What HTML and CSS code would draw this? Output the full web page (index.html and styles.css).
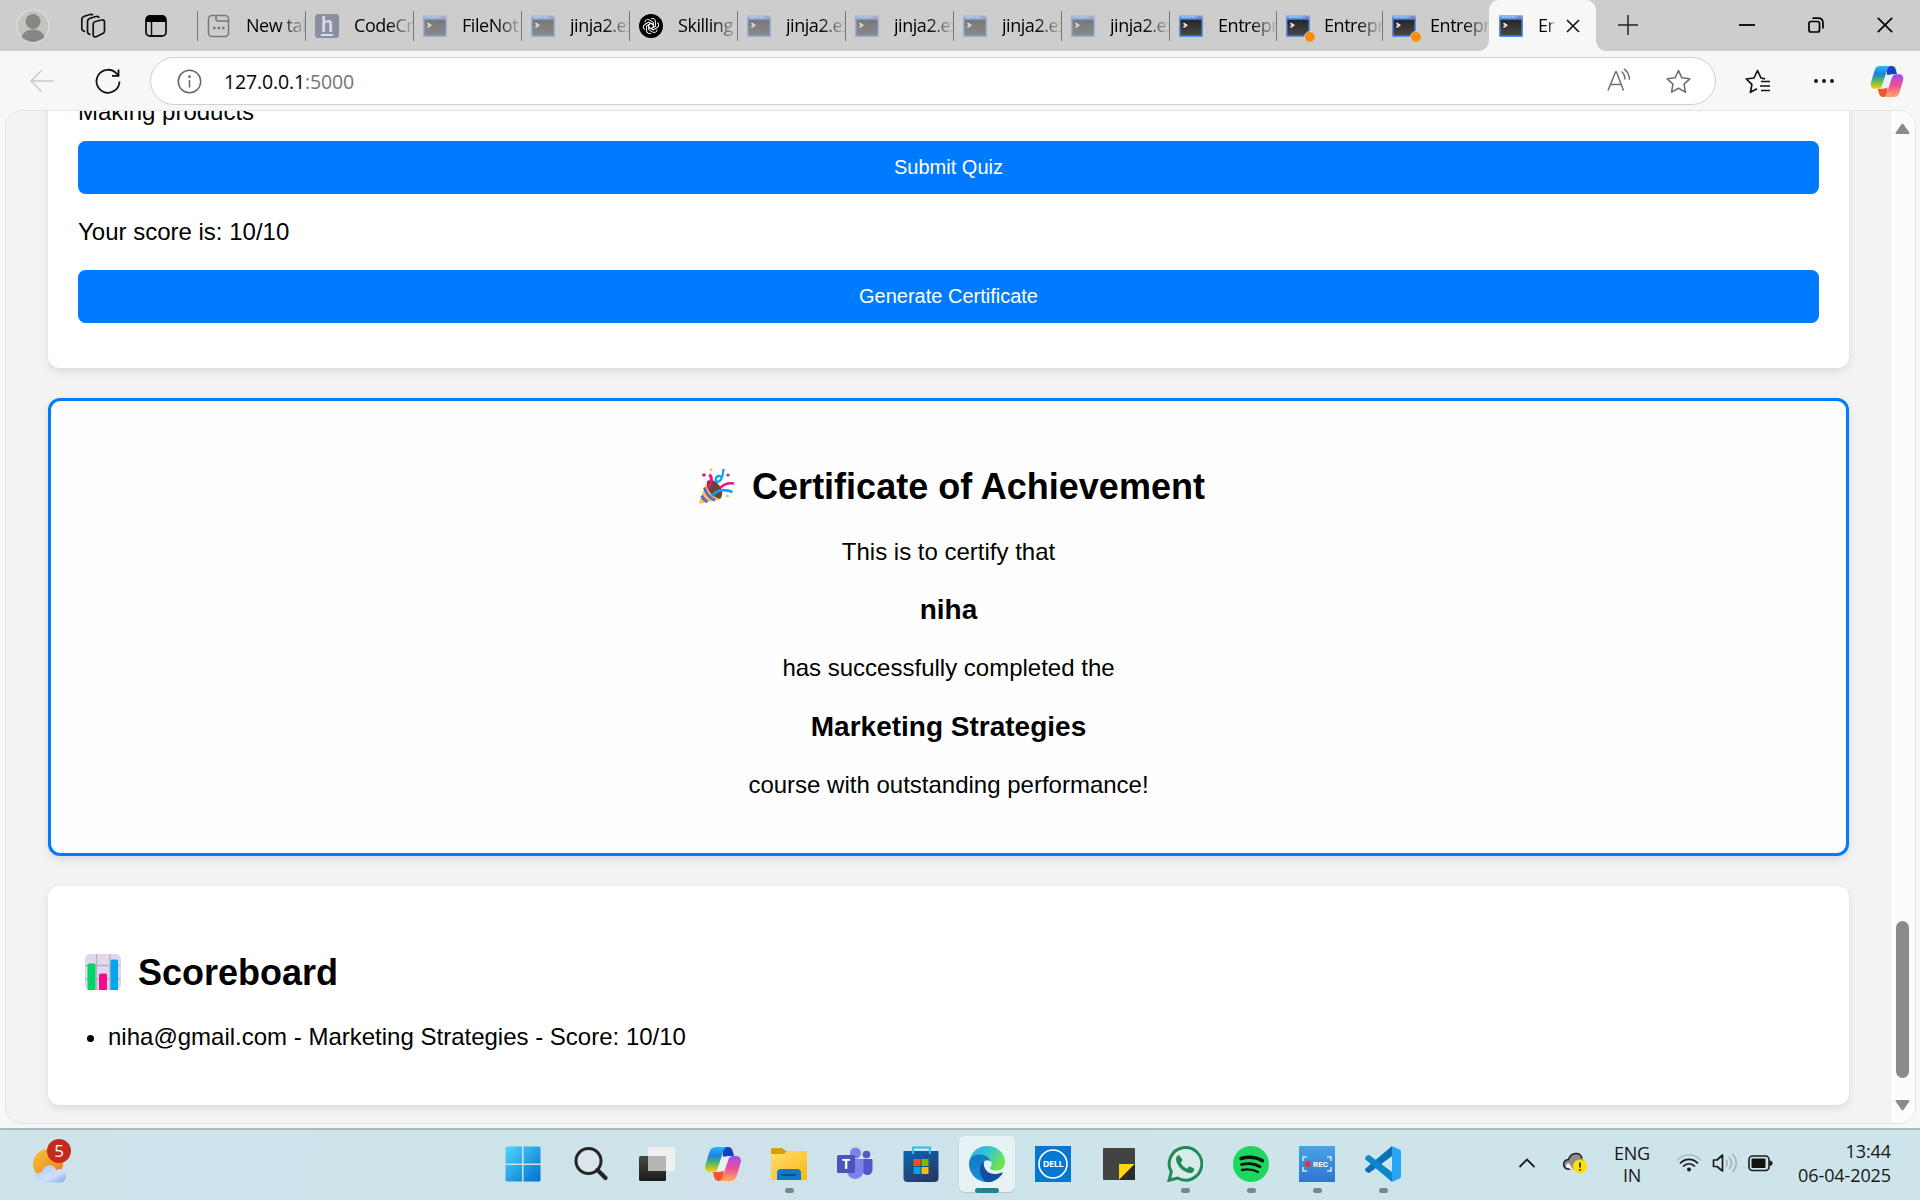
FILE: index.html
```html
<!DOCTYPE html>
<html lang="en">
<head>
<meta charset="utf-8">
<title>Entrepreneur Course</title>
<link rel="stylesheet" href="styles.css">
</head>
<body>
<svg class="defs" width="0" height="0">
  <defs>
    <linearGradient id="gTermBar" x1="0" y1="0" x2="0" y2="1"><stop offset="0" stop-color="#8fc0fb"/><stop offset="1" stop-color="#4b86dc"/></linearGradient>
    <linearGradient id="gTermBody" x1="0" y1="0" x2="0" y2="1"><stop offset="0" stop-color="#262626"/><stop offset="1" stop-color="#484848"/></linearGradient>
    <linearGradient id="gCopA" x1="0" y1="0" x2="0" y2="1"><stop offset="0" stop-color="#25b9f5"/><stop offset=".35" stop-color="#1a83dd"/><stop offset=".62" stop-color="#4db56c"/><stop offset="1" stop-color="#ffd000"/></linearGradient>
    <linearGradient id="gCopB" x1="0" y1="0" x2="0" y2="1"><stop offset="0" stop-color="#a04cf0"/><stop offset=".5" stop-color="#ee5095"/><stop offset="1" stop-color="#ffab62"/></linearGradient>
    <linearGradient id="gWin" x1="0" y1="0" x2="1" y2="1"><stop offset="0" stop-color="#4fd5ff"/><stop offset="1" stop-color="#0070d0"/></linearGradient>
    <linearGradient id="gSun" x1="0" y1="0" x2="1" y2="1"><stop offset="0" stop-color="#eec73c"/><stop offset="1" stop-color="#f4741a"/></linearGradient>
    <linearGradient id="gCloud" x1="0" y1="0" x2="1" y2="1"><stop offset="0" stop-color="#a6c6f6"/><stop offset=".6" stop-color="#d3e1f9"/><stop offset="1" stop-color="#7da6e8"/></linearGradient>
    <linearGradient id="gFolder" x1="0" y1="0" x2="1" y2="1"><stop offset="0" stop-color="#ffdc70"/><stop offset="1" stop-color="#f9b91a"/></linearGradient>
    <linearGradient id="gStore" x1="0" y1="0" x2=".6" y2="1"><stop offset="0" stop-color="#0b66b5"/><stop offset="1" stop-color="#263a68"/></linearGradient>
    <linearGradient id="gEdgeTop" x1="0" y1="0" x2="1" y2=".5"><stop offset="0" stop-color="#2aa9ec"/><stop offset=".5" stop-color="#35c5d4"/><stop offset="1" stop-color="#70e34c"/></linearGradient>
    <linearGradient id="gEdgeLeft" x1="0" y1="0" x2="0" y2="1"><stop offset="0" stop-color="#1379c2"/><stop offset="1" stop-color="#1a8ee0"/></linearGradient>
    <linearGradient id="gRec" x1="0" y1="0" x2="0" y2="1"><stop offset="0" stop-color="#47a3ea"/><stop offset="1" stop-color="#2f75cd"/></linearGradient>
    <linearGradient id="gDark" x1="0" y1="0" x2="0" y2="1"><stop offset="0" stop-color="#494847"/><stop offset="1" stop-color="#1a1a1a"/></linearGradient>
    <symbol id="term" viewBox="0 0 24 22">
      <rect width="24" height="22" rx="1" fill="#5a92e2"/>
      <rect width="24" height="4.5" rx="1" fill="url(#gTermBar)"/>
      <path d="M3 2.2h13" stroke="#c8e0ff" stroke-dasharray="1.5 1"/>
      <rect x="19.5" y="1.3" width="2.2" height="2" fill="#d8536a"/>
      <rect x="1.5" y="4.7" width="21" height="15.8" fill="url(#gTermBody)"/>
      <path d="M4.5 8.3l3 2-3 2" stroke="#eee" stroke-width="1.7" fill="none"/>
    </symbol>
    <symbol id="copilot" viewBox="0 0 36 34">
      <path d="M17 0h6c3 0 4 1.700 4.800 4.300L29 9h-5c-3 0-4.500 2-5.300 5z" fill="#1541c4"/>
      <path d="M19 34h-5c-3 0-4-1.500-4.800-4L8 25h5c3 0 4.500-2 5.300-5z" fill="#f4552e"/>
      <path d="M10.500 0H23c-3 0-4 2-5 5l-5.300 16c-1 3-2.300 4-5.200 4H5c-4 0-5.600-3-4.600-7L4 6c1-4 3-6 6.500-6z" fill="url(#gCopA)"/>
      <path d="M25.500 34H13c3 0 4-2 5-5l5.300-16c1-3 2.300-4 5.200-4H31c4 0 5.600 3 4.600 7L32 28c-1 4-3 6-6.500 6z" fill="url(#gCopB)"/>
      <path d="M19.500 9.500h5.800c-1.500.8-2.200 2.200-2.800 4l-2.300 7c-1 3-2 4-4.500 4h-4.500c1-.8 1.500-1.800 2-3.300l2.600-8c.8-2.400 1.700-3.700 3.700-3.700z" fill="#e8f2f6"/>
    </symbol>
  </defs>
</svg>

<header class="tabstrip">
  <div class="strip-tools">
    <svg width="34" height="34" viewBox="0 0 34 34"><circle cx="17" cy="17" r="16" fill="#c6c4c1" stroke="#e0dedb" stroke-width="1.200"/><circle cx="17" cy="12.500" r="7.500" fill="#8a8683"/><path d="M5.500 28c2-5.500 6.500-7.500 11.500-7.500s9.500 2 11.500 7.500a16 16 0 0 1-23 0z" fill="#8a8683"/></svg>
    <svg width="26" height="26" viewBox="0 0 26 26" fill="none" stroke="#111" stroke-width="1.700" stroke-linejoin="round"><path d="M13.200 10.800c.3-1.300 1-2 2.300-2.300l6.200-1.500c1.700-.4 2.800.4 2.800 2v9c0 1.300-.6 2-1.800 2.500l-6 3c-1.900.9-3.500.2-3.500-1.800z"/><path d="M10.500 21.500c-2-.2-3-1.200-3-3V8.500c0-1.800.8-2.700 2.600-3.300l5.900-1.700c1.500-.4 2.600 0 3.200 1.300"/><path d="M5 18.500c-2-.3-3.200-1.300-3.200-3.200V6.500c0-1.800.8-2.700 2.600-3.300L10 1.500c1.300-.4 2.300-.1 3 .8"/></svg>
    <svg width="24" height="24" viewBox="0 0 24 24"><rect x="2" y="2" width="20" height="20" rx="4" fill="none" stroke="#111" stroke-width="1.800"/><path d="M2 8V5a3.500 3.500 0 0 1 3.500-3.500h13A3.500 3.500 0 0 1 22 5v3z" fill="#000"/><path d="M7.500 8v14" stroke="#111" stroke-width="1.500"/></svg>
  </div>
  <nav class="tabs">
    <div class="tab"><svg class="fav" width="24" height="24" viewBox="0 0 24 24" fill="none" stroke="#777" stroke-width="1.500"><rect x="1.500" y="1.500" width="20" height="21" rx="3.500"/><path d="M9 2v3c0 1.500.7 2 2 2h10"/><path d="M6 14h2.500M10.500 14H13M15 14h2.500" stroke-width="2.500"/></svg><span class="label">New tab</span></div>
    <div class="tab"><span class="fav hacker">h</span><span class="label">CodeCr</span></div>
    <div class="tab"><svg class="fav faded" width="24" height="22"><use href="#term"/></svg><span class="label">FileNot</span></div>
    <div class="tab"><svg class="fav faded" width="24" height="22"><use href="#term"/></svg><span class="label">jinja2.ex</span></div>
    <div class="tab"><svg class="fav" width="24" height="24" viewBox="0 0 24 24"><circle cx="12" cy="12" r="12" fill="#000"/><g fill="none" stroke="#fff" stroke-width="1"><path id="petal" d="M12 9.300l-2.300 1.300v5.200l4.200 2.400c2 1 4.200-.3 4.200-2.600"/><use href="#petal" transform="rotate(60 12 12)"/><use href="#petal" transform="rotate(120 12 12)"/><use href="#petal" transform="rotate(180 12 12)"/><use href="#petal" transform="rotate(240 12 12)"/><use href="#petal" transform="rotate(300 12 12)"/></g></svg><span class="label">Skilling</span></div>
    <div class="tab"><svg class="fav faded" width="24" height="22"><use href="#term"/></svg><span class="label">jinja2.ex</span></div>
    <div class="tab"><svg class="fav faded" width="24" height="22"><use href="#term"/></svg><span class="label">jinja2.ex</span></div>
    <div class="tab"><svg class="fav faded" width="24" height="22"><use href="#term"/></svg><span class="label">jinja2.ex</span></div>
    <div class="tab"><svg class="fav faded" width="24" height="22"><use href="#term"/></svg><span class="label">jinja2.ex</span></div>
    <div class="tab last-full"><svg class="fav" width="24" height="22"><use href="#term"/></svg><span class="label">Entrepr</span></div>
    <div class="tab narrow"><span class="fav alert"><svg width="24" height="22"><use href="#term"/></svg></span><span class="label">Entrepr</span></div>
    <div class="tab mid"><span class="fav alert"><svg width="24" height="22"><use href="#term"/></svg></span><span class="label">Entrepr</span></div>
    <div class="tab active"><svg class="fav" width="24" height="22"><use href="#term"/></svg><span class="label">En</span><svg class="close" width="14" height="14" viewBox="0 0 14 14" stroke="#111" stroke-width="1.600"><path d="M1 1l12 12M13 1L1 13"/></svg></div>
  </nav>
  <svg class="newtab" width="22" height="22" viewBox="0 0 22 22" stroke="#222" stroke-width="1.500"><path d="M11 1v20M1 11h20"/></svg>
  <div class="window-controls">
    <svg width="16" height="16" viewBox="0 0 16 16" stroke="#000" stroke-width="1.800"><path d="M0 8h16"/></svg>
    <svg width="16" height="16" viewBox="0 0 16 16" fill="none" stroke="#000" stroke-width="1.700"><rect x="1" y="4.500" width="10.500" height="10.500" rx="2"/><path d="M4.500 1.200H10c3 0 5 1.800 5 4.800v5.500"/></svg>
    <svg width="16" height="16" viewBox="0 0 16 16" stroke="#000" stroke-width="1.700"><path d="M.8.8l14.400 14.400M15.200.8L.8 15.200"/></svg>
  </div>
</header>

<div class="toolbar">
  <svg class="back" width="26" height="24" viewBox="0 0 26 24" fill="none" stroke="#c9c9c9" stroke-width="1.600"><path d="M25 12H2M12.500 1.500L2 12l10.500 10.500"/></svg>
  <svg class="reload" width="26" height="26" viewBox="0 0 26 26" fill="none" stroke="#111" stroke-width="1.800"><path d="M24.500 13.500A11.500 11.500 0 1 1 21.500 5.500l2 2"/><path d="M23.500 1.500v6.300h-6.500"/></svg>
  <div class="address">
    <svg width="25" height="25" viewBox="0 0 25 25" fill="none" stroke="#666" stroke-width="1.500"><circle cx="12.500" cy="12.500" r="11.200"/><path d="M12.500 11v7.500"/><circle cx="12.500" cy="7.700" r=".6"/></svg>
    <span class="url">127.0.0.1<i>:5000</i></span>
    <svg class="read" width="25" height="24" viewBox="0 0 25 24" fill="none" stroke="#707070" stroke-width="1.500"><path d="M1 22.500L8.500 4h1L16.500 22.500M3.500 16.500h11"/><path d="M14.500 3.500c2.500 2 3.500 4.500 3.500 8M17 .8c4 3 5.500 6.500 5.500 11"/></svg>
    <svg class="star" width="25" height="25" viewBox="0 0 25 25" fill="none" stroke="#707070" stroke-width="1.600" stroke-linejoin="round"><path d="M12.500 1.500l3.400 7.300 7.900 1-5.800 5.400 1.500 7.900-7-3.900-7 3.900L7 15.200 1.200 9.800l7.900-1z"/></svg>
  </div>
  <svg class="favs" width="26" height="25" viewBox="0 0 26 25" fill="none" stroke="#111" stroke-width="1.700" stroke-linejoin="round"><path d="M20 9.800L16 9l-3.500-7.500L9 9l-7.800 1 5.700 5.400-1.500 7.900 6.600-3.600M16 12.500h9M15 17h10M16 21.500h9"/></svg>
  <svg class="more" width="22" height="6" viewBox="0 0 22 6" fill="#111"><circle cx="3" cy="3" r="1.900"/><circle cx="11" cy="3" r="1.900"/><circle cx="19" cy="3" r="1.900"/></svg>
  <svg class="cop" width="34" height="31"><use href="#copilot"/></svg>
</div>

<div class="viewport">
  <main class="page">
    <section class="card quiz">
      <p class="option">Making products</p>
      <button class="btn">Submit Quiz</button>
      <p class="score">Your score is: 10/10</p>
      <button class="btn">Generate Certificate</button>
    </section>
    <section class="card certificate">
      <h2><svg class="emoji" width="36" height="36" viewBox="0 0 36 36" fill="none"><path d="M8 13c4-2 8-1 12 4s4 11 1 14L7 33z" fill="#6d4534"/><path d="M7.500 13.500c0 9 6 16 14.500 17.500L2 35.500c-1.500.3-2-.5-1.700-1.700z" fill="#fcc24c"/><path d="M5.500 19.500C7 26 10.500 30 16 32.300M2.800 27.500c1 3 3 5.200 5.700 6.500" stroke="#5e68dc" stroke-width="3"/><path d="M10.500 6.500c3 3.500 2.500 9-2 13.500" stroke="#f70a8d" stroke-width="3"/><path d="M24.500 1c-.5 6-2 11-4.500 12.500-2.500 1-4-1-3-3.500 1.200-2.500 4-2.500 5-1" stroke="#0aa5ee" stroke-width="2.300"/><path d="M21 20c3.500-3.500 8-5.500 14-4.500" stroke="#f70a8d" stroke-width="2.700"/><path d="M13 28c5-6 12-7.500 20.500-4" stroke="#0aa5ee" stroke-width="2.800"/><circle cx="5" cy="7" r="1.800" fill="#f70a8d"/><circle cx="29" cy="7" r="1.600" fill="#f70a8d"/><circle cx="12" cy="1.800" r="1.500" fill="#fcc24c"/><circle cx="28.500" cy="28" r="1.500" fill="#fcc24c"/></svg> Certificate of Achievement</h2>
      <p>This is to certify that</p>
      <h3>niha</h3>
      <p>has successfully completed the</p>
      <h3 class="course">Marketing Strategies</h3>
      <p>course with outstanding performance!</p>
    </section>
    <section class="card scoreboard">
      <h2><svg class="emoji" width="36" height="36" viewBox="0 0 36 36"><rect width="36" height="36" rx="5" fill="#e1d8ec"/><path d="M11.500 0v36M25 0v36M0 11.500h36M0 25h36" stroke="#b8b0c2" stroke-width="1.300"/><path d="M2.500 36V11a1.500 1.500 0 0 1 1.500-1.500h5a1.500 1.500 0 0 1 1.500 1.500v25z" fill="#00d26a"/><path d="M14 36V21a1.500 1.500 0 0 1 1.500-1.500h5A1.500 1.500 0 0 1 22 21v15z" fill="#f70a8d"/><path d="M25.500 36V7A1.500 1.500 0 0 1 27 5.500h4.500A1.500 1.500 0 0 1 33 7v29z" fill="#00a6ed"/></svg> Scoreboard</h2>
      <ul><li>niha@gmail.com - Marketing Strategies - Score: 10/10</li></ul>
    </section>
  </main>
  <aside class="scrollbar">
    <svg class="up" width="15" height="11" viewBox="0 0 15 11"><path d="M7.500 1.500L13.500 10h-12z" fill="#8b8b8b" stroke="#8b8b8b" stroke-width="2" stroke-linejoin="round"/></svg>
    <div class="thumb"></div>
    <svg width="15" height="11" viewBox="0 0 15 11"><path d="M7.500 9.500L13.500 1h-12z" fill="#8b8b8b" stroke="#8b8b8b" stroke-width="2" stroke-linejoin="round"/></svg>
  </aside>
</div>

<footer class="taskbar">
  <div class="weather">
    <svg width="34" height="34" viewBox="0 0 34 34"><circle cx="15" cy="15" r="15" fill="url(#gSun)"/><path d="M8 33.500a5 5 0 0 1-1-10c2 0 2-.500 2.500-2 2.500-7 11.500-7 14 0 4-3.500 9.500-.500 9.500 5 0 4-2 7-5 7z" fill="url(#gCloud)"/></svg>
    <span class="badge">5</span>
  </div>
  <div class="apps">
    <div class="app start"><svg width="36" height="36" viewBox="0 0 36 36"><path d="M2 .5h15v17H.500V2A1.500 1.500 0 0 1 2 .5zM18.500.5H34A1.500 1.500 0 0 1 35.500 2v15.500h-17zM.500 19h16.500v16.500H2A1.500 1.500 0 0 1 .500 34zM18.500 19h17v15a1.500 1.500 0 0 1-1.500 1.500H18.500z" fill="url(#gWin)"/></svg></div>
    <div class="app"><svg width="36" height="36" viewBox="0 0 36 36" fill="none" stroke="#262524"><circle cx="15.500" cy="15" r="12.500" stroke-width="3" fill="#d9e6ee"/><path d="M24.500 24l8 8" stroke-width="4.200" stroke-linecap="round"/></svg></div>
    <div class="app"><svg width="36" height="36" viewBox="0 0 36 36"><rect x="0" y="10" width="27" height="25" rx="1.500" fill="url(#gDark)"/><rect x="9" y="1" width="27" height="24" rx="1" fill="#f0f0f0"/><path d="M9 10h18v15H9z" fill="#b5b5b5"/></svg></div>
    <div class="app"><svg width="36" height="34"><use href="#copilot"/></svg></div>
    <div class="app run"><svg width="36" height="36" viewBox="0 0 36 36"><path d="M0 3.500A1.500 1.500 0 0 1 1.500 2H10c3 0 3 3 6 3v5H0z" fill="#dc9c08"/><path d="M0 8h13l3-3h19a1 1 0 0 1 1 1v28H0z" fill="url(#gFolder)"/><path d="M6 34v-7a4 4 0 0 1 4-4h16a4 4 0 0 1 4 4v7z" fill="#0e78c9"/><path d="M10.500 29h14.500" stroke="#06508f" stroke-width="2"/></svg></div>
    <div class="app"><svg width="36" height="36" viewBox="0 0 36 36"><circle cx="29.500" cy="8.500" r="3.800" fill="#5059c9"/><path d="M25 13h9.500a1 1 0 0 1 1 1v9c0 8-10 8-10.500 0z" fill="#5059c9"/><circle cx="18.500" cy="7" r="5.500" fill="#7b83eb"/><path d="M10 13h15.500a1 1 0 0 1 1 1v10c0 12-16.500 12-16.500 0z" fill="#7b83eb"/><rect y="9" width="18" height="18" rx="1.500" fill="#4b53bc"/><text x="9" y="23" text-anchor="middle" class="teams-t">T</text></svg></div>
    <div class="app"><svg width="36" height="36" viewBox="0 0 36 36"><path d="M10 8V1.500h17V8" fill="none" stroke="#28c0ef" stroke-width="2"/><path d="M.500 5h35v27a4 4 0 0 1-4 4h-27a4 4 0 0 1-4-4z" fill="url(#gStore)"/><path d="M10 8V4M27 8V4" stroke="#28c0ef" stroke-width="2"/><path d="M10.500 13h7v7h-7z" fill="#f25022"/><path d="M18.500 13h7v7h-7z" fill="#7fba00"/><path d="M10.500 21h7v7h-7z" fill="#00a4ef"/><path d="M18.500 21h7v7h-7z" fill="#ffb900"/></svg></div>
    <div class="app current"><svg width="36" height="36" viewBox="0 0 36 36"><path d="M18 0c10.500 0 18 7 18 16 0 6-4 8.500-9 8.500-4 0-6.500-1.500-6-3 3-3 2-8-3-8C10 7 3 9 .500 14.500 2 6 9.500 0 18 0z" fill="url(#gEdgeTop)"/><path d="M0 18C0 11 6 8 11.500 8.500c6 .5 10 4 10 8 0-2-5.500-4-7.500 1-2 8 2 15 10 17.500-2 .7-4 1-6 1C8 36 0 28 0 18z" fill="url(#gEdgeLeft)"/><path d="M15 15c-5 4-6.500 13 1.500 20.900C25 37 30.500 32 33.500 27.500c.5-.8-.2-1.300-1-.9C23 31 13 25 15 15z" fill="#124f9f"/></svg></div>
    <div class="app"><svg width="36" height="36" viewBox="0 0 36 36"><path d="M0 0h36v36H0z" fill="#0678d2"/><circle cx="18" cy="18" r="14" fill="none" stroke="#fff" stroke-width="1.600"/><text x="18" y="21.200" text-anchor="middle" class="dell-t">DELL</text></svg></div>
    <div class="app"><svg width="36" height="36" viewBox="0 0 36 36"><rect x="2" y="2" width="32" height="32" rx="1" fill="#434343"/><path d="M18 18h15.500L18 34z" fill="#ffd60a"/><path d="M34 18v16H18z" fill="#2b2b2b"/></svg></div>
    <div class="app run"><svg width="36" height="36" viewBox="0 0 36 36"><path d="M2 34.300l2.300-8.500A16.300 16.300 0 1 1 10.500 32z" fill="#d8ebe8" stroke="#208a57" stroke-width="3"/><path d="M12.500 9.500c-1-.6-3.500.5-3.500 4C9.500 20 17 27 23.500 27c3 0 4-2.500 3.500-4.500l-4.500-2.200-2.500 2.500c-3-1.500-5-3.500-6.300-6.300l2-2.500z" fill="#208a57"/></svg></div>
    <div class="app run"><svg width="36" height="36" viewBox="0 0 36 36" fill="none" stroke="#111" stroke-linecap="round"><circle cx="18" cy="18" r="18" fill="#1ed760" stroke="none"/><path d="M8 12.500c7-2 15.500-1.300 21.500 2.300" stroke-width="3.400"/><path d="M8.500 18.500c6-1.500 13-1 18.500 2.200" stroke-width="2.800"/><path d="M9 24c5-1 11-.7 16 2" stroke-width="2.300"/></svg></div>
    <div class="app run"><svg width="36" height="36" viewBox="0 0 36 36"><path d="M0 0h36v36H0z" fill="url(#gRec)"/><path d="M8 11H4v4M28 11h4v4M8 25H4v-4M28 25h4v-4" fill="none" stroke="#d5e8fb" stroke-width="1.500"/><circle cx="8.800" cy="18" r="2.900" fill="#d9383c"/><text x="21.500" y="20.800" text-anchor="middle" class="rec-t">REC</text></svg></div>
    <div class="app run"><svg width="36" height="36" viewBox="0 0 36 36"><path d="M27 0v10L4.500 26.700c-.8.600-1.500.5-2.200-.1L.500 24.800c-.7-.7-.7-1.500 0-2.200z" fill="#0a70b8"/><path d="M27 36V26L4.500 9.300c-.8-.6-1.500-.5-2.200.1L.500 11.200c-.7.700-.7 1.500 0 2.200z" fill="#0b87cf"/><path d="M27 0l7.500 3.500c1 .5 1.500 1 1.500 2.200v24.600c0 1.200-.5 1.700-1.500 2.200L27 36z" fill="#27a5f3"/></svg></div>
  </div>
  <div class="tray">
    <svg class="chev" width="18" height="10" viewBox="0 0 18 10" fill="none" stroke="#1c1c1c" stroke-width="1.800"><path d="M1.500 9L9 1.500 16.500 9"/></svg>
    <svg class="cloud" width="26" height="22" viewBox="0 0 26 22"><path d="M7 17.500c-7 0-8-9.500-.5-10C9-.5 19-.5 20 7c4 1 4 9-1 10z" fill="#8e8e8e"/><path d="M7 17.500c-4-1-4-6 0-6.500l4 6.500z" fill="#eee"/><path d="M8 17.200c-8 .3-8.500-9.200-1.500-9.700C9 0 18.500-.5 20 6.500" fill="none" stroke="#222" stroke-width="1.500"/><circle cx="18" cy="14.500" r="7" fill="#ffe000"/><path d="M18 10.500v5M18 17v1.800" stroke="#222" stroke-width="1.700"/></svg>
    <div class="lang">ENG<br>IN</div>
    <svg class="wifi" width="26" height="20" viewBox="0 0 26 20" fill="none" stroke="#1c1c1c" stroke-width="1.700"><path d="M1 7.500c7-7.500 17-7.500 24 0" stroke="#a3b4ba" stroke-width="1.400"/><path d="M4 10.500c5-5.500 13-5.500 18 0M7 13.500c3.500-3.700 8.500-3.700 12 0"/><circle cx="13" cy="16.500" r="2" fill="#1c1c1c" stroke="none"/></svg>
    <svg class="vol" width="26" height="20" viewBox="0 0 26 20" fill="none" stroke="#1c1c1c" stroke-width="1.700"><path d="M1.500 7H5l5.500-5v16L5 13.500H1.500z" stroke-linejoin="round"/><path d="M14 7c1.500 2 1.500 4.500 0 6.500M17 4c3.500 4 3.500 8 0 12M20.500 1c5 5.500 5 12.500 0 18" stroke="#9dadb2" stroke-width="1.400"/></svg>
    <svg class="bat" width="25" height="17" viewBox="0 0 25 17"><rect x="1" y="1" width="20" height="14.500" rx="3.500" fill="none" stroke="#1c1c1c" stroke-width="1.600"/><rect x="3.500" y="3.500" width="14" height="9.500" rx="1" fill="#111"/><path d="M21.500 5.500c4 0 4 5.500 0 5.500z" fill="#1c1c1c"/></svg>
    <div class="clock">13:44<br>06-04-2025</div>
  </div>
</footer>
</body>
</html>
```
FILE: styles.css
```css
* { box-sizing: border-box; }
html, body { height: 100%; }
body {
  margin: 0;
  display: flex;
  flex-direction: column;
  overflow: hidden;
  background: #f7f7f7;
  font-family: "Open Sans", "Noto Sans", sans-serif;
  color: #000;
}
svg { display: block; flex: none; }
.defs { position: absolute; }

/* Tab strip */
.tabstrip { display: flex; align-items: center; height: 51px; flex: none; background: #cdcdcd; }
.strip-tools { display: flex; align-items: center; width: 197px; flex: none; padding-left: 16px; }
.strip-tools svg:nth-child(2) { margin-left: 30px; }
.strip-tools svg:nth-child(3) { margin-left: 38px; }
.tabs { display: flex; height: 51px; flex: none; }
.tab { position: relative; display: flex; align-items: center; width: 108px; padding-left: 10px; background: linear-gradient(#777, #777) 0 11px / 1px 30px no-repeat; }
.tab.last-full { width: 107px; }
.tab.narrow { width: 106px; }
.tab.mid { width: 107px; }
.fav { flex: none; }
.faded { opacity: .5; }
.hacker { width: 24px; height: 24px; border-radius: 3px; background: #8b8da0; color: #dcdce4; font: 500 22px/21px "Roboto", sans-serif; text-align: center; text-decoration: underline; }
.label {
  flex: 1;
  margin-left: 15px;
  overflow: hidden;
  white-space: nowrap;
  font-size: 18px;
  line-height: 24px;
  letter-spacing: -.45px;
  -webkit-mask-image: linear-gradient(to right, #000 58%, transparent 104%);
  mask-image: linear-gradient(to right, #000 58%, transparent 104%);
}
.tab .label { padding-bottom: 1px; }
.narrow .label, .mid .label { margin-left: 14px; }
.alert { position: relative; width: 24px; }
.alert::after { content: ""; position: absolute; left: 18px; top: 16px; width: 10px; height: 10px; border-radius: 50%; border: 1px solid #cdcdcd; background: #ff8c00; background-clip: padding-box; box-sizing: content-box; }
.tab.active { width: 107px; background: #f7f7f7; border-radius: 10px 10px 0 0; }
.tab.active::before, .tab.active::after { content: ""; position: absolute; bottom: 0; width: 10px; height: 10px; }
.tab.active::before { left: -10px; background: radial-gradient(circle at 0 0, transparent 9.5px, #f7f7f7 10px); }
.tab.active::after { right: -10px; background: radial-gradient(circle at 100% 0, transparent 9.5px, #f7f7f7 10px); }
.tab.active .label { flex: none; width: 17px; }
.close { margin-left: 11px; }
.newtab { margin: -1px 0 0 21px; }
.window-controls { display: flex; gap: 53px; margin: -1px 0 0 auto; padding-right: 27px; }

/* Toolbar */
.toolbar { display: flex; align-items: center; height: 59px; flex: none; padding: 1px 16px 0 29px; }
.reload { margin-left: 40px; }
.address { display: flex; align-items: center; width: 1566px; height: 48px; flex: none; margin-left: 29px; padding: 0 24px 0 26px; border: 1px solid #cfcfcf; border-radius: 24px; background: #fff; }
.url { flex: 1; margin-left: 22px; font-size: 19.500px; letter-spacing: -.15px; }
.url i { font-style: normal; color: #757575; }
.read { margin-top: -3px; }
.star { margin-left: 34px; }
.favs { margin-left: 29px; }
.more { margin-left: 42px; }
.cop { margin-left: auto; }

/* Page viewport */
.viewport { display: flex; height: 1014px; flex: none; margin: 0 4px 0 5px; border: 1px solid #e3e3e3; border-radius: 16px; overflow: hidden; background: #f3f3f3; }
.page { display: flex; flex-direction: column; gap: 30px; width: 1885px; height: 1012px; padding: 0 42px; overflow: hidden; font: 24px/28px "Liberation Sans", Arial, sans-serif; }
.page p, .page h2, .page h3, .page ul { margin: 0; }
.page h2 { font-size: 36px; line-height: 48px; }
.page h3 { font-size: 28px; line-height: 32px; }
.card { flex: none; padding: 0 30px; border-radius: 12px; background: #fff; box-shadow: 0 3px 9px rgba(0, 0, 0, .1); }
.quiz { height: 270px; margin-top: -13px; }
.btn { display: block; width: 100%; height: 53px; border: 0; border-radius: 7.500px; background: #007bff; color: #fff; font: 20px "Liberation Sans", Arial, sans-serif; }
.option { height: 43px; }
.score { padding: 24px 0; }
.certificate { display: flex; flex-direction: column; gap: 28px; height: 458px; padding-top: 62px; border: 3px solid #007bff; background: #fefefe; text-align: center; }
.certificate h2 { margin-bottom: -1px; }
.certificate .course { margin-top: 1px; }
.emoji { display: inline-block; margin: 0 7px; vertical-align: -5px; }
.scoreboard { height: 219px; padding-top: 63px; }
.scoreboard ul { margin-top: 26px; padding-left: 30px; }

.scrollbar { display: flex; flex-direction: column; align-items: center; width: 24px; padding: 12px 1px 12px 0; background: #fcfcfc; }
.up { margin-bottom: auto; }
.thumb { width: 13px; height: 157px; margin-bottom: 22px; border-radius: 7px; background: #8b8b8b; }

/* Taskbar */
.taskbar { display: flex; height: 72px; margin-top: 4px; flex: none; border-top: 2px solid #a8b8bc; background: linear-gradient(100deg, #cde4e9, #cfe3ec 12%, #cce4e8 25%, #cfe2eb 38%, #cce4ea 60%, #cde4eb); }
.weather { position: relative; width: 490px; padding: 19px 0 0 33px; flex: none; }
.badge { position: absolute; left: 47px; top: 9px; width: 24px; height: 24px; border-radius: 50%; background: #c42b1c; color: #fff; font-size: 17px; line-height: 24px; text-align: center; }
.apps { display: flex; flex: none; }
.app { position: relative; width: 66px; height: 68px; display: flex; align-items: center; justify-content: center; }
.app.start { margin-right: 2px; }
.app.run::after, .app.current::after { content: ""; position: absolute; left: 29px; top: 58px; width: 9px; height: 5px; border-radius: 3px; background: #7b868a; }
.app.current::before { content: ""; position: absolute; left: 5px; top: 6px; width: 56px; height: 56px; border-radius: 6px; background: #e7f2f5; box-shadow: 0 1px 1px #b3c8ce; }
.app.current svg { position: relative; }
.app.current::after { left: 21px; width: 24px; background: #26818f; }
.teams-t { font: bold 14px "Open Sans", sans-serif; fill: #fff; }
.dell-t { font: bold 9px "Open Sans", sans-serif; fill: #fff; letter-spacing: -.3px; }
.rec-t { font: bold 8px "Roboto", sans-serif; fill: #fff; }
.tray { display: flex; align-items: center; flex: 1; padding: 0 29px 4px 102px; font-size: 18px; line-height: 24px; color: #161616; }
.cloud { margin-left: 26px; }
.lang { width: 42px; margin: 2px 0 0 23px; text-align: center; letter-spacing: -.2px; line-height: 22px; }
.wifi { margin-left: 23px; }
.vol { margin-left: 10px; }
.bat { margin-left: 10px; }
.clock { flex: 1; text-align: right; white-space: nowrap; letter-spacing: -.1px; }
```
